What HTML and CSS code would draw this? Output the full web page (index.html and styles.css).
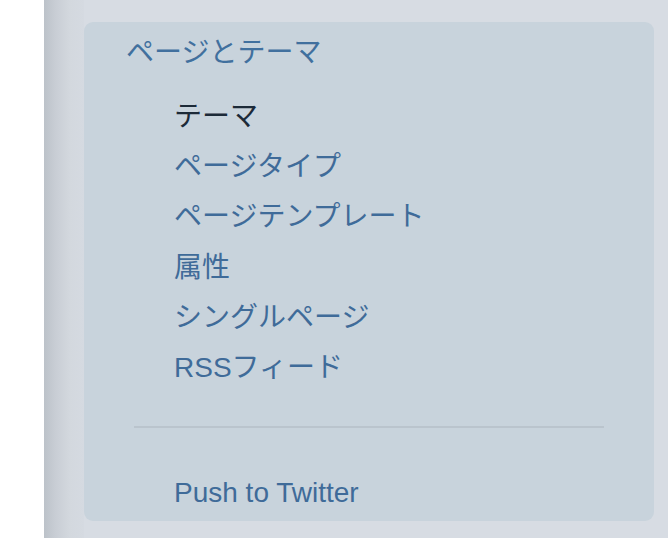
FILE: index.html
```html
<!DOCTYPE html>
<html lang="ja">
<head>
<meta charset="utf-8">
<link rel="stylesheet" href="styles.css">
</head>
<body>
<div class="app">
  <div class="gutter"></div>
  <div class="sidebar">
    <div class="shade"></div>
    <div class="main">
      <section class="panel">
        <h2 class="heading">ページとテーマ</h2>
        <ul class="menu">
          <li class="item active">テーマ</li>
          <li class="item">ページタイプ</li>
          <li class="item">ページテンプレート</li>
          <li class="item">属性</li>
          <li class="item">シングルページ</li>
          <li class="item">RSSフィード</li>
        </ul>
        <hr class="divider">
        <ul class="menu extra">
          <li class="item">Push to Twitter</li>
        </ul>
      </section>
    </div>
  </div>
</div>
</body>
</html>
```
FILE: styles.css
```css
html, body {
  margin: 0;
  padding: 0;
  height: 100%;
}
body {
  background: #ffffff;
  font-family: "Liberation Sans", "Noto Sans CJK JP", sans-serif;
  overflow: hidden;
}
.app {
  display: flex;
  height: 538px;
}
.gutter {
  width: 44px;
  flex: none;
  background: #ffffff;
}
.sidebar {
  flex: 1;
  display: flex;
  background: #d7dce3;
}
.shade {
  width: 40px;
  flex: none;
  background: linear-gradient(to right, #bcc2c9 0%, #c9ced5 30%, #d3d8de 65%, #d5dae1 100%);
}
.main {
  flex: 1;
  padding: 22px 14px 0 0;
}
.panel {
  background: #c8d3dc;
  border-radius: 9px;
  height: 499px;
  box-sizing: border-box;
  padding: 3px 0 0 0;
}
.heading {
  margin: 0 0 17px 0;
  padding-left: 42px;
  font-family: "Noto Sans CJK JP", sans-serif;
  font-weight: 400;
  font-size: 28px;
  line-height: 50px;
  color: #41709e;
}
.menu {
  list-style: none;
  margin: 0;
  padding: 0 0 0 90px;
}
.item {
  font-family: "Liberation Sans", "Noto Sans CJK JP", sans-serif;
  font-size: 28px;
  line-height: 50.2px;
  color: #3f6b99;
}
.item.active {
  color: #1c2a38;
}
.divider {
  border: 0;
  height: 2px;
  background: #bac4cd;
  margin: 33px 50px 40px 50px;
}
```
